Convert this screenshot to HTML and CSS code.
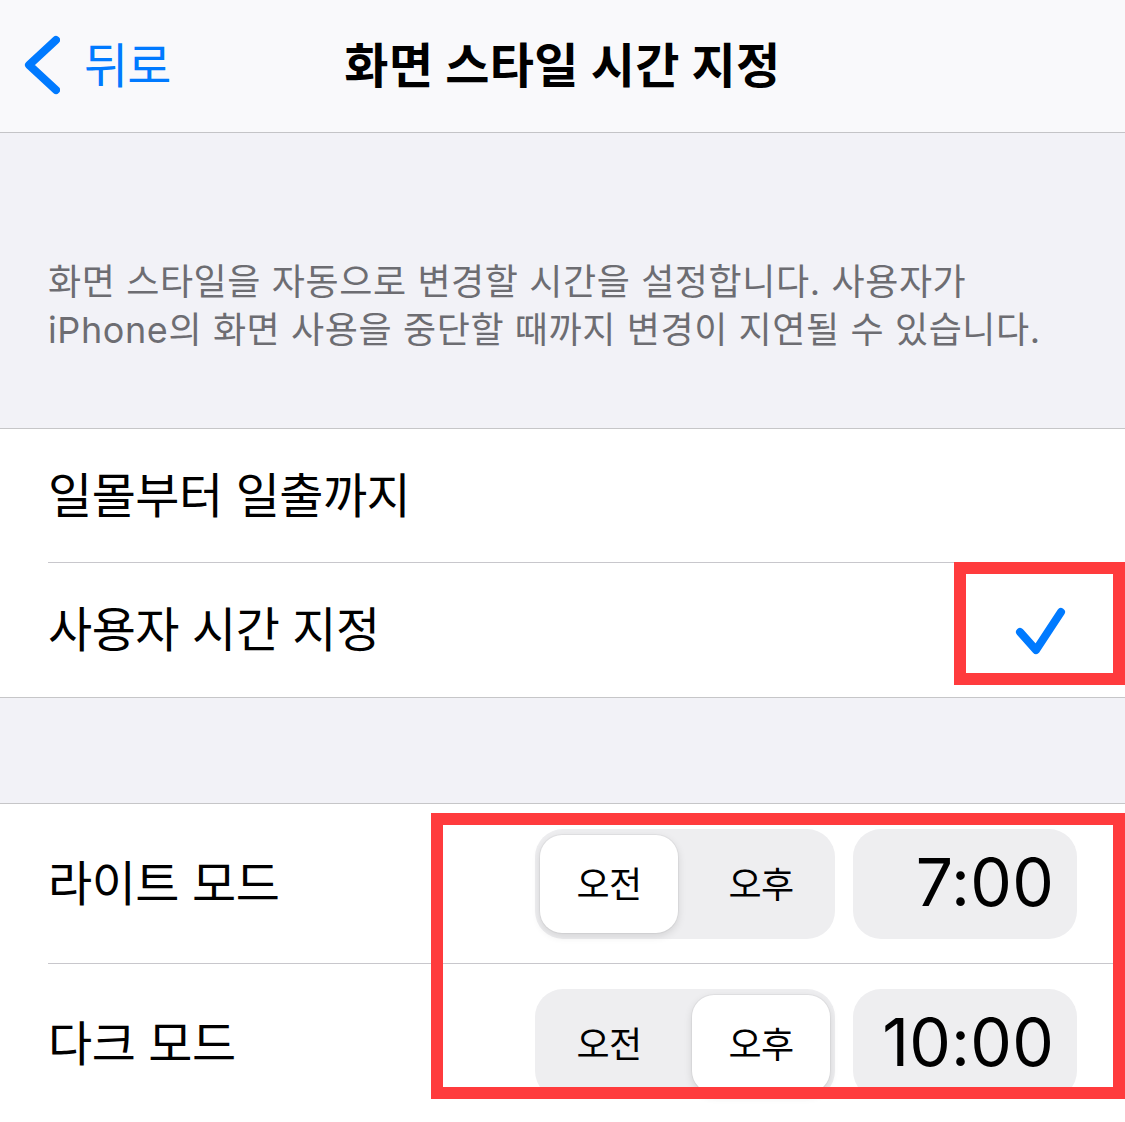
FILE: index.html
```html
<!DOCTYPE html>
<html lang="ko">
<head>
<meta charset="utf-8">
<title>화면 스타일 시간 지정</title>
<link rel="stylesheet" href="styles.css">
</head>
<body>
<div class="page">
  <header class="nav">
    <div class="back">
      <svg class="chevron" width="60" height="132" viewBox="0 0 60 132"><path d="M56 40 L29 65 L56 90" fill="none" stroke="#007aff" stroke-width="8" stroke-linecap="round" stroke-linejoin="round"/></svg>
      <span class="back-label">뒤로</span>
    </div>
    <h1 class="title">화면 스타일 시간 지정</h1>
    <div></div>
  </header>

  <section class="info">
    <p class="info-text">화면 스타일을 자동으로 변경할 시간을 설정합니다. 사용자가<br>iPhone의 화면 사용을 중단할 때까지 변경이 지연될 수 있습니다.</p>
  </section>

  <ul class="group group-mode">
    <li class="row"><div class="row-inner"><span class="label">일몰부터 일출까지</span></div></li>
    <li class="row"><div class="row-inner"><span class="label">사용자 시간 지정</span>
      <svg class="check" width="60" height="60" viewBox="0 0 60 60"><path d="M10 32 L26 50 L51 12" fill="none" stroke="#007aff" stroke-width="8" stroke-linecap="round" stroke-linejoin="round"/></svg>
    </div></li>
  </ul>

  <div class="spacer"></div>

  <ul class="group group-time">
    <li class="row tall"><div class="row-inner"><span class="label">라이트 모드</span>
      <div class="controls">
        <div class="segment"><span class="seg selected">오전</span><span class="seg">오후</span></div>
        <div class="time">7:00</div>
      </div>
    </div></li>
    <li class="row tall"><div class="row-inner"><span class="label">다크 모드</span>
      <div class="controls">
        <div class="segment"><span class="seg">오전</span><span class="seg selected">오후</span></div>
        <div class="time">10:00</div>
      </div>
    </div></li>
  </ul>

  <div class="mark mark-check"></div>
  <div class="mark mark-time"></div>
</div>
</body>
</html>
```

FILE: styles.css
```css
* { box-sizing: border-box; }
html, body { margin: 0; padding: 0; }
body {
  background: #ffffff;
  font-family: Inter, "Noto Sans CJK KR", sans-serif;
  color: #000;
  overflow: hidden;
}
.page { position: relative; width: 1125px; }

.nav {
  height: 133px;
  background: #f9f9fb;
  border-bottom: 1px solid #c4c4c7;
  display: grid;
  grid-template-columns: 1fr auto 1fr;
  align-items: center;
}
.back { display: flex; align-items: center; height: 132px; }
.chevron { display: block; }
.back-label {
  margin-left: 24px;
  color: #007aff;
  font-size: 48px;
  letter-spacing: -1px;
  line-height: 1;
}
.title {
  margin: 0;
  font-size: 48px;
  font-weight: 700;
  letter-spacing: 0.4px;
  line-height: 1;
}

.info {
  background: #f2f2f7;
  padding: 125px 48px 74px;
}
.info-text {
  margin: 0;
  color: #6d6d72;
  font-size: 36px;
  line-height: 48px;
  letter-spacing: 0.6px;
  white-space: nowrap;
}

.group {
  list-style: none;
  margin: 0;
  padding: 0;
  background: #fff;
  border-top: 1px solid #c6c6c8;
  border-bottom: 1px solid #c6c6c8;
}
.row { padding-left: 48px; }
.row-inner {
  height: 134px;
  display: flex;
  align-items: center;
  justify-content: space-between;
}
.row:not(:last-child) .row-inner { border-bottom: 1px solid #c8c7cc; }
.row.tall .row-inner { height: 160px; }
.group-time { border-bottom: none; }

.label {
  font-size: 48px;
  letter-spacing: -0.5px;
  line-height: 1;
}
.check { margin-right: 55px; display: block; }

.spacer { height: 105px; background: #f2f2f7; }

.controls {
  display: flex;
  align-items: center;
  gap: 18px;
  margin-right: 48px;
}
.segment {
  width: 300px;
  height: 110px;
  background: #eeeef0;
  border-radius: 28px;
  padding: 6px 5px;
  display: grid;
  grid-template-columns: 1fr 1fr;
  column-gap: 14px;
}
.seg {
  display: flex;
  align-items: center;
  justify-content: center;
  border-radius: 22px;
  font-size: 36px;
  letter-spacing: -0.5px;
  padding-bottom: 4px;
}
.seg.selected {
  background: #fff;
  box-shadow: 0 3px 8px rgba(0,0,0,0.12), 0 0 0 1px rgba(0,0,0,0.04);
}
.time {
  width: 224px;
  height: 110px;
  background: #eeeef0;
  border-radius: 28px;
  display: flex;
  align-items: center;
  justify-content: flex-end;
  padding-right: 23px;
  font-size: 66px;
  font-weight: 400;
  letter-spacing: 0.2px;
  padding-bottom: 4px;
}

.mark {
  position: absolute;
  border: 12px solid #ff3b3d;
  pointer-events: none;
}
.mark-check { left: 954px; top: 562px; width: 171px; height: 123px; }
.mark-time { left: 431px; top: 813px; width: 694px; height: 286px; }
```
